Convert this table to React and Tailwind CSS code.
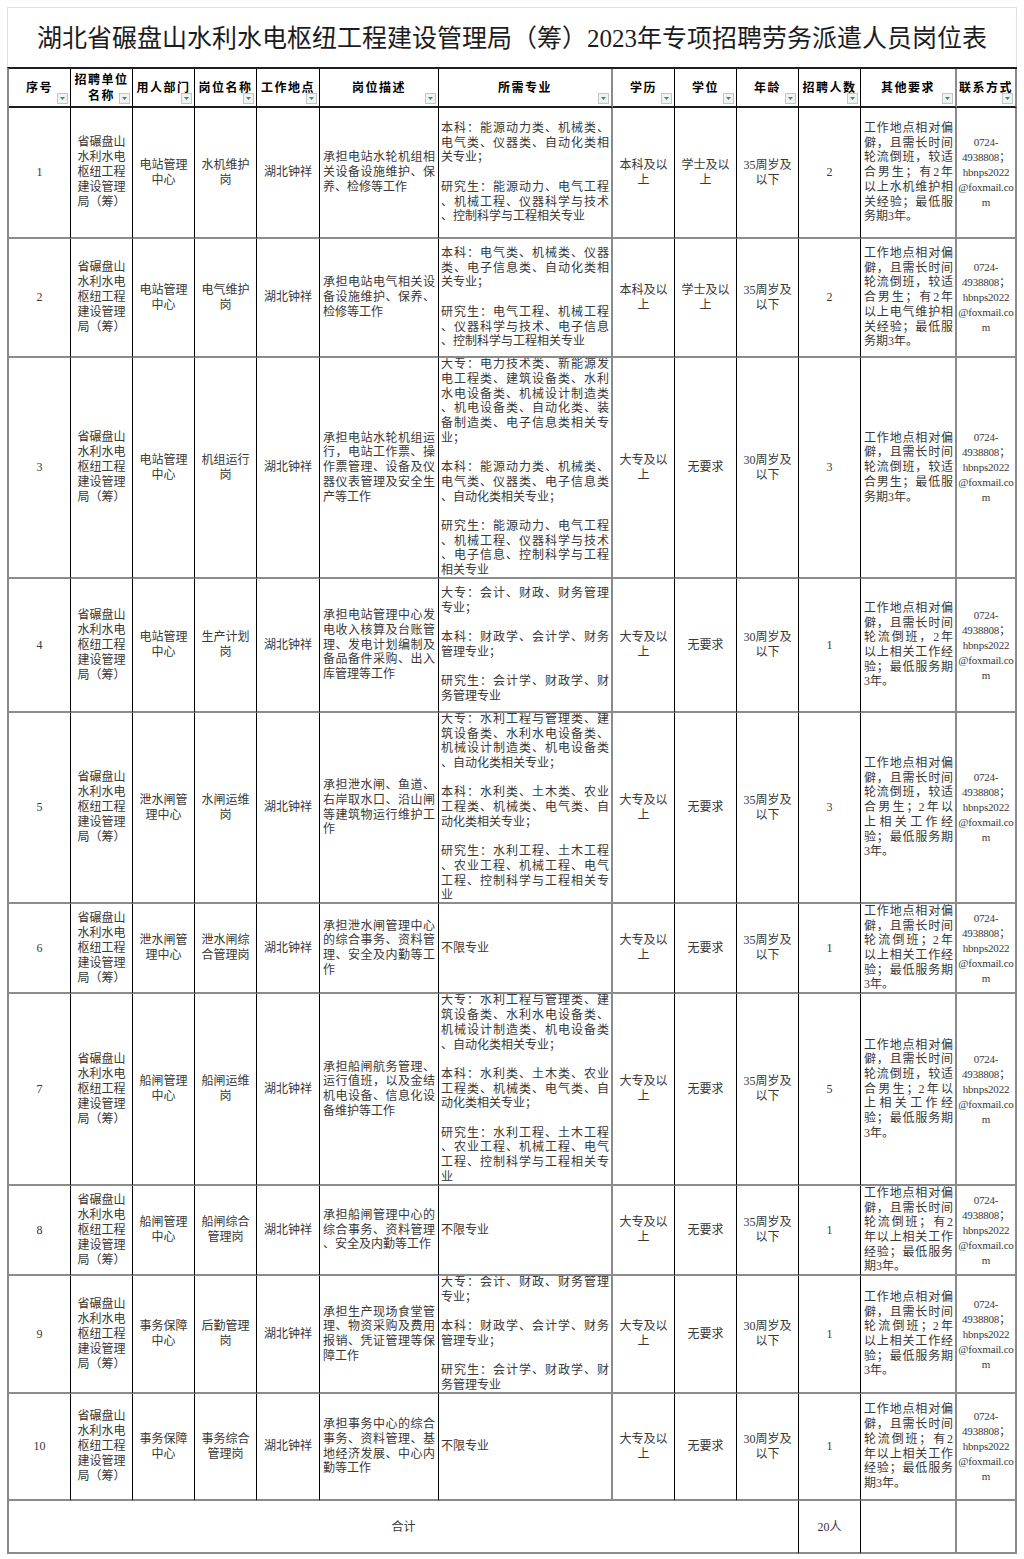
import React from "react";

const UNIT = ["省碾盘山", "水利水电", "枢纽工程", "建设管理", "局（筹）"];
const CONTACT = ["0724-", "4938808；", "hbnps2022", "@foxmail.co", "m"];

const MAJOR_FIN = [
  "大专：会计、财政、财务管理",
  "专业；",
  "",
  "本科：财政学、会计学、财务",
  "管理专业；",
  "",
  "研究生：会计学、财政学、财",
  "务管理专业",
];

const MAJOR_HYD = [
  "大专：水利工程与管理类、建",
  "筑设备类、水利水电设备类、",
  "机械设计制造类、机电设备类",
  "、自动化类相关专业；",
  "",
  "本科：水利类、土木类、农业",
  "工程类、机械类、电气类、自",
  "动化类相关专业；",
  "",
  "研究生：水利工程、土木工程",
  "、农业工程、机械工程、电气",
  "工程、控制科学与工程相关专",
  "业",
];

const OTHER_MALE_2Y = [
  "工作地点相对偏",
  "僻，且需长时间",
  "轮流倒班，较适",
  "合男生；2年以",
  "上相关工作经",
  "验；最低服务期",
  "3年。",
];

const OTHER_2Y = [
  "工作地点相对偏",
  "僻，且需长时间",
  "轮流倒班；2年",
  "以上相关工作经",
  "验；最低服务期",
  "3年。",
];

const OTHER_HAS_2Y = [
  "工作地点相对偏",
  "僻，且需长时间",
  "轮流倒班；有2",
  "年以上相关工作",
  "经验；最低服务",
  "期3年。",
];

const rows = [
  {
    no: "1",
    dept: ["电站管理", "中心"],
    post: ["水机维护", "岗"],
    desc: ["承担电站水轮机组相", "关设备设施维护、保", "养、检修等工作"],
    major: [
      "本科：能源动力类、机械类、",
      "电气类、仪器类、自动化类相",
      "关专业；",
      "",
      "研究生：能源动力、电气工程",
      "、机械工程、仪器科学与技术",
      "、控制科学与工程相关专业",
    ],
    edu: ["本科及以", "上"],
    degree: ["学士及以", "上"],
    age: ["35周岁及", "以下"],
    count: "2",
    other: [
      "工作地点相对偏",
      "僻，且需长时间",
      "轮流倒班，较适",
      "合男生；有2年",
      "以上水机维护相",
      "关经验；最低服",
      "务期3年。",
    ],
  },
  {
    no: "2",
    dept: ["电站管理", "中心"],
    post: ["电气维护", "岗"],
    desc: ["承担电站电气相关设", "备设施维护、保养、", "检修等工作"],
    major: [
      "本科：电气类、机械类、仪器",
      "类、电子信息类、自动化类相",
      "关专业；",
      "",
      "研究生：电气工程、机械工程",
      "、仪器科学与技术、电子信息",
      "、控制科学与工程相关专业",
    ],
    edu: ["本科及以", "上"],
    degree: ["学士及以", "上"],
    age: ["35周岁及", "以下"],
    count: "2",
    other: [
      "工作地点相对偏",
      "僻，且需长时间",
      "轮流倒班，较适",
      "合男生；有2年",
      "以上电气维护相",
      "关经验；最低服",
      "务期3年。",
    ],
  },
  {
    no: "3",
    dept: ["电站管理", "中心"],
    post: ["机组运行", "岗"],
    desc: [
      "承担电站水轮机组运",
      "行，电站工作票、操",
      "作票管理、设备及仪",
      "器仪表管理及安全生",
      "产等工作",
    ],
    major: [
      "大专：电力技术类、新能源发",
      "电工程类、建筑设备类、水利",
      "水电设备类、机械设计制造类",
      "、机电设备类、自动化类、装",
      "备制造类、电子信息类相关专",
      "业；",
      "",
      "本科：能源动力类、机械类、",
      "电气类、仪器类、电子信息类",
      "、自动化类相关专业；",
      "",
      "研究生：能源动力、电气工程",
      "、机械工程、仪器科学与技术",
      "、电子信息、控制科学与工程",
      "相关专业",
    ],
    edu: ["大专及以", "上"],
    degree: ["无要求"],
    age: ["30周岁及", "以下"],
    count: "3",
    other: [
      "工作地点相对偏",
      "僻，且需长时间",
      "轮流倒班，较适",
      "合男生；最低服",
      "务期3年。",
    ],
  },
  {
    no: "4",
    dept: ["电站管理", "中心"],
    post: ["生产计划", "岗"],
    desc: [
      "承担电站管理中心发",
      "电收入核算及台账管",
      "理、发电计划编制及",
      "备品备件采购、出入",
      "库管理等工作",
    ],
    major: MAJOR_FIN,
    edu: ["大专及以", "上"],
    degree: ["无要求"],
    age: ["30周岁及", "以下"],
    count: "1",
    other: [
      "工作地点相对偏",
      "僻，且需长时间",
      "轮流倒班，2年",
      "以上相关工作经",
      "验；最低服务期",
      "3年。",
    ],
  },
  {
    no: "5",
    dept: ["泄水闸管", "理中心"],
    post: ["水闸运维", "岗"],
    desc: [
      "承担泄水闸、鱼道、",
      "右岸取水口、沿山闸",
      "等建筑物运行维护工",
      "作",
    ],
    major: MAJOR_HYD,
    edu: ["大专及以", "上"],
    degree: ["无要求"],
    age: ["35周岁及", "以下"],
    count: "3",
    other: OTHER_MALE_2Y,
  },
  {
    no: "6",
    dept: ["泄水闸管", "理中心"],
    post: ["泄水闸综", "合管理岗"],
    desc: [
      "承担泄水闸管理中心",
      "的综合事务、资料管",
      "理、安全及内勤等工",
      "作",
    ],
    major: ["不限专业"],
    edu: ["大专及以", "上"],
    degree: ["无要求"],
    age: ["35周岁及", "以下"],
    count: "1",
    other: OTHER_2Y,
  },
  {
    no: "7",
    dept: ["船闸管理", "中心"],
    post: ["船闸运维", "岗"],
    desc: [
      "承担船闸航务管理、",
      "运行值班，以及金结",
      "机电设备、信息化设",
      "备维护等工作",
    ],
    major: MAJOR_HYD,
    edu: ["大专及以", "上"],
    degree: ["无要求"],
    age: ["35周岁及", "以下"],
    count: "5",
    other: OTHER_MALE_2Y,
  },
  {
    no: "8",
    dept: ["船闸管理", "中心"],
    post: ["船闸综合", "管理岗"],
    desc: ["承担船闸管理中心的", "综合事务、资料管理", "、安全及内勤等工作"],
    major: ["不限专业"],
    edu: ["大专及以", "上"],
    degree: ["无要求"],
    age: ["35周岁及", "以下"],
    count: "1",
    other: OTHER_HAS_2Y,
  },
  {
    no: "9",
    dept: ["事务保障", "中心"],
    post: ["后勤管理", "岗"],
    desc: [
      "承担生产现场食堂管",
      "理、物资采购及费用",
      "报销、凭证管理等保",
      "障工作",
    ],
    major: MAJOR_FIN,
    edu: ["大专及以", "上"],
    degree: ["无要求"],
    age: ["30周岁及", "以下"],
    count: "1",
    other: OTHER_2Y,
  },
  {
    no: "10",
    dept: ["事务保障", "中心"],
    post: ["事务综合", "管理岗"],
    desc: [
      "承担事务中心的综合",
      "事务、资料管理、基",
      "地经济发展、中心内",
      "勤等工作",
    ],
    major: ["不限专业"],
    edu: ["大专及以", "上"],
    degree: ["无要求"],
    age: ["30周岁及", "以下"],
    count: "1",
    other: OTHER_HAS_2Y,
  },
];

const headers = [
  ["序号"],
  ["招聘单位", "名称"],
  ["用人部门"],
  ["岗位名称"],
  ["工作地点"],
  ["岗位描述"],
  ["所需专业"],
  ["学历"],
  ["学位"],
  ["年龄"],
  ["招聘人数"],
  ["其他要求"],
  ["联系方式"],
];

// right-hand rule for each of the 13 columns
const RIGHT = [
  "border-r border-r-black",
  "border-r border-r-black",
  "border-r border-r-black",
  "border-r border-r-black",
  "border-r border-r-black",
  "border-r border-r-black",
  "border-r-2 border-r-[#8a8a8a]",
  "border-r border-r-black",
  "border-r border-r-black",
  "border-r border-r-black",
  "border-r border-r-black",
  "border-r-2 border-r-[#8a8a8a]",
  "border-r-2 border-r-[#8a8a8a]",
];

const ROW_LINE = "border-b-2 border-b-[#8c8c8c]";

const FilterButton = () => (
  <span className="absolute right-[2px] bottom-[2px] w-[11px] h-[11px] bg-[#f2f2f2] border border-[#c6c6c6] flex items-center justify-center">
    <svg width="7" height="5" viewBox="0 0 7 5">
      <polygon points="1,1 6,1 3.5,4" fill="#159f6b" />
    </svg>
  </span>
);

const Centered = ({ lines }) => (
  <div className="w-full text-center leading-[15px]">
    {lines.map((l, i) => (
      <div key={i}>{l}</div>
    ))}
  </div>
);

const Para = ({ lines }) => (
  <div className="w-full leading-[14.7px]">
    {lines.map((l, i) => {
      if (l === "") return <div key={i} className="h-[14.7px]" />;
      const last = i === lines.length - 1 || lines[i + 1] === "";
      return (
        <div
          key={i}
          className={last ? "text-left" : "text-justify [text-align-last:justify]"}
        >
          {l}
        </div>
      );
    })}
  </div>
);

const Cell = ({ col, children, pad = "px-[2px]" }) => (
  <div className={`${RIGHT[col]} ${ROW_LINE} ${pad} flex items-center overflow-hidden`}>
    {children}
  </div>
);

export default function App() {
  return (
    <div className="w-[1024px] min-h-[1559px] bg-white pt-[7px] px-[7px] text-[#383838] font-['Liberation_Serif','Noto_Sans_CJK_SC',serif] text-[12px]">
      <div className="w-[1010px] h-[60px] border border-b-0 border-[#dde1ea] flex items-center justify-center text-[25px] text-[#1c1c1c] pt-[2px]">
        湖北省碾盘山水利水电枢纽工程建设管理局（筹）2023年专项招聘劳务派遣人员岗位表
      </div>
      <div className="w-[1010px] grid grid-cols-[62px_62px_62px_62px_63px_119px_174px_62px_62px_62px_62px_96px_60px] grid-rows-[39px_131px_119px_221px_134px_191px_90px_192px_90px_118px_107px_53px] border-l-2 border-l-[#8a8a8a] border-t-2 border-t-[#1e1e1e]">
        {headers.map((h, i) => (
          <div
            key={i}
            className={`${RIGHT[i]} border-b-2 border-b-[#1e1e1e] relative flex items-center justify-center text-center font-['Noto_Sans_CJK_SC',sans-serif] font-bold text-black tracking-[1.5px] leading-[16px] pb-[2px]`}
          >
            <div>
              {h.map((t, k) => (
                <div key={k}>{t}</div>
              ))}
            </div>
            <FilterButton />
          </div>
        ))}

        {rows.map((r) => (
          <React.Fragment key={r.no}>
            <Cell col={0}>
              <Centered lines={[r.no]} />
            </Cell>
            <Cell col={1}>
              <Centered lines={UNIT} />
            </Cell>
            <Cell col={2}>
              <Centered lines={r.dept} />
            </Cell>
            <Cell col={3}>
              <Centered lines={r.post} />
            </Cell>
            <Cell col={4}>
              <Centered lines={["湖北钟祥"]} />
            </Cell>
            <Cell col={5} pad="pl-[3px] pr-[3px]">
              <Para lines={r.desc} />
            </Cell>
            <Cell col={6} pad="pl-[2px] pr-[2px]">
              <Para lines={r.major} />
            </Cell>
            <Cell col={7}>
              <Centered lines={r.edu} />
            </Cell>
            <Cell col={8}>
              <Centered lines={r.degree} />
            </Cell>
            <Cell col={9}>
              <Centered lines={r.age} />
            </Cell>
            <Cell col={10}>
              <Centered lines={[r.count]} />
            </Cell>
            <Cell col={11} pad="pl-[3px] pr-[2px]">
              <Para lines={r.other} />
            </Cell>
            <Cell col={12} pad="px-0">
              <div className="w-full text-center leading-[15px] text-[11px] tracking-[-0.2px] whitespace-nowrap">
                {CONTACT.map((l, i) => (
                  <div key={i}>{l}</div>
                ))}
              </div>
            </Cell>
          </React.Fragment>
        ))}

        <div className={`col-span-10 ${RIGHT[9]} ${ROW_LINE} flex items-center justify-center`}>
          合计
        </div>
        <div className={`${RIGHT[10]} ${ROW_LINE} flex items-center justify-center`}>
          20人
        </div>
        <div className={`${RIGHT[11]} ${ROW_LINE}`} />
        <div className={`${RIGHT[12]} ${ROW_LINE}`} />
      </div>
    </div>
  );
}
